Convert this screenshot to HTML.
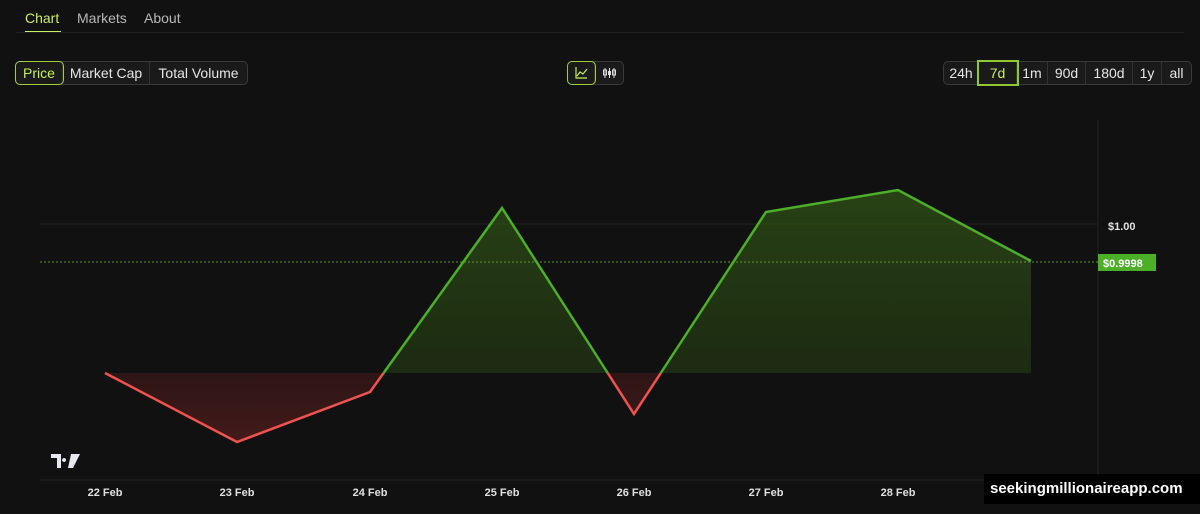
<!DOCTYPE html>
<html><head><style>
body{margin:0;width:1200px;height:514px;background:#111111;overflow:hidden;font-family:"Liberation Sans",sans-serif;position:relative;color:#ddd}
.tab{position:absolute;top:10px;font-size:14px;color:#b8b8b8}
.seg{position:absolute;display:flex;border:1px solid #3a3a3a;border-radius:5px;background:#1a1a1a;height:22px;font-size:14px}
.seg div{padding:0 6px;line-height:22px;border-right:1px solid #333;color:#e6e6e6;text-align:center;box-sizing:border-box}
.seg div:last-child{border-right:none}
.seg .on{color:#c6ef5a;outline:1px solid #9ccf3a;border-radius:4px}
.tf div{padding:0}
.ax{position:absolute;top:487px;font-size:11px;font-weight:bold;color:#e0e0e0;transform:translateX(-50%)}
</style></head><body>
<div class="tab" style="left:25px;color:#c9ef63">Chart</div>
<div style="position:absolute;left:25px;top:31px;width:36px;height:2px;background:#c9ef63"></div>
<div class="tab" style="left:77px">Markets</div>
<div class="tab" style="left:144px">About</div>
<div style="position:absolute;left:16px;top:32px;width:1168px;height:1px;background:#222"></div>

<div class="seg" style="left:15px;top:61px"><div class="on" style="width:47px">Price</div><div style="width:87px">Market Cap</div><div style="width:97px">Total Volume</div></div>
<div class="seg" style="left:567px;top:61px;height:22px">
<div class="on" style="width:27px;padding:0 6px"><svg width="15" height="22" viewBox="0 0 15 22"><path d="M2 5V16H13M3 14l3-4 3 2 4-5" stroke="#c6ef5a" fill="none" stroke-width="1.2"/></svg></div>
<div style="width:28px;padding:0 6px"><svg width="15" height="22" viewBox="0 0 15 22"><path d="M3 6v10M7.5 6v10M12 6v10" stroke="#ddd"/><rect x="1.5" y="8" width="3" height="5" fill="none" stroke="#ddd"/><rect x="6" y="9" width="3" height="4" fill="#ddd"/><rect x="10.5" y="8" width="3" height="5" fill="none" stroke="#ddd"/></svg></div>
</div>
<div class="seg tf" style="left:943px;top:61px"><div style="width:35px">24h</div><div class="on" style="outline:2px solid #8fc832;border-radius:0;width:38px">7d</div><div style="width:31px">1m</div><div style="width:38px">90d</div><div style="width:47px">180d</div><div style="width:29px">1y</div><div style="width:29px">all</div></div>

<svg width="1200" height="514" style="position:absolute;left:0;top:0">
<defs>
<linearGradient id="g" x1="0" y1="190" x2="0" y2="373" gradientUnits="userSpaceOnUse"><stop offset="0" stop-color="#3b6a18" stop-opacity=".55"/><stop offset="1" stop-color="#2a4a12" stop-opacity=".45"/></linearGradient>
<linearGradient id="r" x1="0" y1="373" x2="0" y2="442" gradientUnits="userSpaceOnUse"><stop offset="0" stop-color="#4a1a1a" stop-opacity=".5"/><stop offset="1" stop-color="#5a1e1e" stop-opacity=".7"/></linearGradient>
</defs>
<line x1="40" y1="224" x2="1098" y2="224" stroke="#222"/>
<line x1="1098" y1="120" x2="1098" y2="480" stroke="#222"/>
<line x1="40" y1="480" x2="1200" y2="480" stroke="#222"/>
<path d="M383.6 373L502 208L607.7 373ZM660.8 373L766 212L898 190L1031 261L1031 373Z" fill="url(#g)"/>
<path d="M105 373L237 442L370 392L383.6 373ZM607.7 373L634 414L660.8 373Z" fill="url(#r)"/>
<line x1="40" y1="262" x2="1098" y2="262" stroke="#5a9a2a" stroke-dasharray="2,2"/>
<polyline points="105,373 237,442 370,392 383.6,373" fill="none" stroke="#ef5350" stroke-width="2.5"/>
<polyline points="383.6,373 502,208 607.7,373" fill="none" stroke="#4caf28" stroke-width="2.5"/>
<polyline points="607.7,373 634,414 660.8,373" fill="none" stroke="#ef5350" stroke-width="2.5"/>
<polyline points="660.8,373 766,212 898,190 1031,261" fill="none" stroke="#4caf28" stroke-width="2.5"/>
<rect x="1098" y="254" width="58" height="17" fill="#4caf28"/>
<text x="1103" y="267" font-size="11" font-weight="bold" fill="#fff" font-family="Liberation Sans">$0.9998</text>
<text x="1108" y="230" font-size="11" font-weight="bold" fill="#e0e0e0" font-family="Liberation Sans">$1.00</text>
<path d="M51 454h10v14h-4v-10h-6zM64 458a2 2 0 1 0 .1 0zM71 454h9l-7 14h-5z" fill="#e8e8f0"/>
</svg>
<div class="ax" style="left:105px">22 Feb</div>
<div class="ax" style="left:237px">23 Feb</div>
<div class="ax" style="left:370px">24 Feb</div>
<div class="ax" style="left:502px">25 Feb</div>
<div class="ax" style="left:634px">26 Feb</div>
<div class="ax" style="left:766px">27 Feb</div>
<div class="ax" style="left:898px">28 Feb</div>
<div style="position:absolute;left:984px;top:474px;width:216px;height:30px;background:#000;color:#fff;font-size:15px;font-weight:bold;line-height:30px;padding-left:6px">seekingmillionaireapp.com</div>
</body></html>
